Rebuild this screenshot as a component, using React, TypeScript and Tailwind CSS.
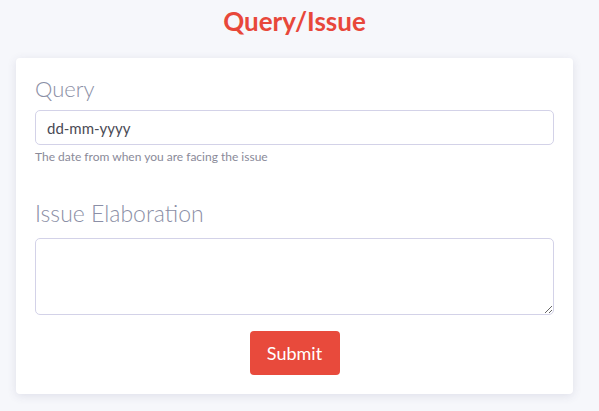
export default function App() {
  return (
    <div className="min-h-screen bg-[#f6f7fb] pt-[6px]" style={{ fontFamily: 'Lato, "Noto Sans", sans-serif' }}>
      <div className="w-[589px]">
        <h1 className="text-center text-[26px] font-bold leading-[30px] text-[#e8473a]">Query/Issue</h1>
        <form className="mx-[16px] mt-[22px] rounded-[4px] bg-white px-[19px] pb-[19px] pt-[16px] shadow-[0_2px_10px_rgba(60,60,110,0.12)]">
          <label className="block text-[22px] font-light leading-[30px] text-[#8b8fa6]">Query</label>
          <input
            type="text"
            placeholder="dd-mm-yyyy"
            className="mt-[6px] block h-[35px] w-full rounded-[5px] border border-[#d3d2e8] px-[11px] text-[15px] text-[#4a4a55] outline-none placeholder:text-[#4a4a55]"
          />
          <p className="mt-[5px] text-[12px] leading-[14px] text-[#8a8a99]">The date from when you are facing the issue</p>
          <label className="mt-[34px] block text-[23px] font-light leading-[30px] text-[#8b8fa6]">Issue Elaboration</label>
          <textarea className="mt-[10px] block h-[77px] w-full resize-y rounded-[5px] border border-[#d3d2e8] px-[11px] py-[6px] text-[15px] outline-none" />
          <div className="mt-[16px] flex justify-center">
            <button type="button" className="h-[44px] w-[90px] rounded-[4px] bg-[#e84a3c] text-[18px] text-white">Submit</button>
          </div>
        </form>
      </div>
    </div>
  );
}
